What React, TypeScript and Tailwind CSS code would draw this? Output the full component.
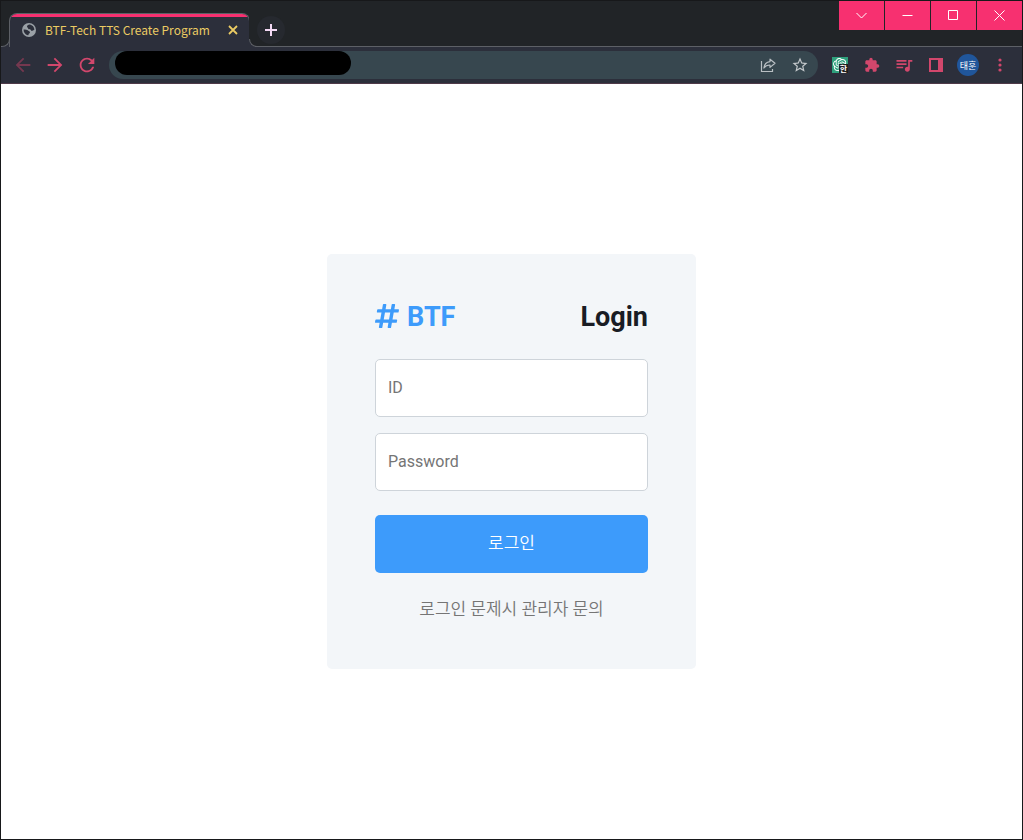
import type { ButtonHTMLAttributes, ReactNode } from "react";
import { FaHashtag } from "react-icons/fa";
import {
  MdArrowBack,
  MdArrowForward,
  MdExtension,
  MdQueueMusic,
  MdRefresh,
  MdStarBorder,
} from "react-icons/md";
import { SiOpenai } from "react-icons/si";

type IconButtonProps = ButtonHTMLAttributes<HTMLButtonElement> & {
  label: string;
  tone?: string;
  children: ReactNode;
};

function ToolButton({ label, tone = "text-[#d2476c]", children, ...rest }: IconButtonProps) {
  return (
    <button
      type="button"
      aria-label={label}
      className={`flex h-7 w-8 shrink-0 items-center justify-center ${tone}`}
      {...rest}
    >
      {children}
    </button>
  );
}

function WindowButton({ label, path }: { label: string; path: string }) {
  return (
    <button
      type="button"
      aria-label={label}
      className="flex h-[29px] w-[45px] items-center justify-center bg-[#f73070] text-white"
    >
      <svg width="11" height="11" viewBox="0 0 11 11" fill="none" stroke="currentColor">
        <path d={path} />
      </svg>
    </button>
  );
}

function GlobeIcon() {
  return (
    <svg width="14" height="14" viewBox="0 0 14 14" className="shrink-0">
      <circle cx="7" cy="7" r="7" fill="#9aa0a6" />
      <path
        d="M7.600 1.600C6.200 2 5 2.700 5 3.600c0 .9.900.9 1 1.700.1 1 1.300 1 2.300 1.200.8.200.6 1.400 1.600 1.400.9 0 1.100-.9 2.400-.8C12.500 4.300 10.500 2 7.600 1.600z"
        fill="#2c2f3b"
      />
      <path
        d="M1.600 6.600c-.2 2.600 1.500 5 4.200 5.700.6.100.8-.5.800-1.100 0-.8 1.400-.7 1.400-1.700 0-1.300-1.300-1-2-1.900C5.300 6.700 3.400 6.600 1.600 6.600z"
        fill="#2c2f3b"
      />
    </svg>
  );
}

function TabStrip() {
  return (
    <div className="flex h-[46px] items-end bg-[#212427]">
      <div className="h-2 w-[9px] shrink-0 bg-[#2c2f3b]">
        <div className="h-2 w-[9px] rounded-br-lg border-r border-b border-[#5d6066] bg-[#212427]" />
      </div>
      <div className="-ml-px h-[34px] w-[241px] overflow-hidden rounded-t-lg border-x border-t border-[#5d6066] bg-[#2c2f3b]">
        <div className="h-[3px] bg-[#f73070]" />
        <div className="flex h-[26px] items-center pr-2 pl-3 text-[#ebcb63]">
          <GlobeIcon />
          <span className="ml-[9px] flex-1 truncate font-['Noto_Sans_CJK_KR','Open_Sans',sans-serif] text-[12px] leading-4">
            BTF-Tech TTS Create Program
          </span>
          <button type="button" aria-label="Close tab" className="flex h-4 w-4 items-center justify-center">
            <svg width="10" height="10" viewBox="0 0 10 10" fill="none" stroke="currentColor" strokeWidth="1.8">
              <path d="M1 1l8 8M9 1l-8 8" />
            </svg>
          </button>
        </div>
      </div>
      <div className="-ml-px flex h-[46px] flex-1 items-end bg-[#212427]">
        <div className="h-2 w-2 shrink-0 bg-[#2c2f3b]">
          <div className="h-2 w-2 rounded-bl-lg border-b border-l border-[#5d6066] bg-[#212427]" />
        </div>
        <div className="flex h-[46px] flex-1 justify-between border-b border-[#5d6066]">
          <button
            type="button"
            aria-label="New tab"
            className="mt-[15px] flex h-7 w-7 items-center justify-center rounded-full bg-[#26292f] text-[#f3d9f4]"
          >
            <svg width="12" height="12" viewBox="0 0 12 12" fill="none" stroke="currentColor" strokeWidth="2">
              <path d="M6 0v12M0 6h12" />
            </svg>
          </button>
          <div className="flex gap-px">
            <WindowButton label="Search tabs" path="M.5 3l5 5 5-5" />
            <WindowButton label="Minimize" path="M.5 5.500h10" />
            <WindowButton label="Maximize" path="M.5.5h9v9h-9z" />
            <WindowButton label="Close" path="M.5.500l10 10M10.500.500l-10 10" />
          </div>
        </div>
      </div>
    </div>
  );
}

function Toolbar() {
  return (
    <div className="flex h-[37px] items-start border-b border-[#4f3a49] bg-[#2c2f3b] px-[6px] pt-1">
      <ToolButton label="Back" tone="text-[#75384f]" disabled>
        <MdArrowBack size={22} />
      </ToolButton>
      <ToolButton label="Forward">
        <MdArrowForward size={22} />
      </ToolButton>
      <ToolButton label="Reload">
        <MdRefresh size={22} />
      </ToolButton>
      <div className="mx-[6px] flex h-7 flex-1 items-start rounded-full bg-[#37474f] pr-[2px] pl-[6px]">
        <input
          type="text"
          aria-label="Address"
          className="h-6 w-[236px] rounded-full bg-black px-3 text-xs text-black outline-none"
        />
        <div className="flex-1" />
        <ToolButton label="Share" tone="text-[#b9bfc3]">
          <svg width="16" height="16" viewBox="0 0 16 16" fill="none" stroke="currentColor" strokeWidth="1.2">
            <path d="M1.500 4v10.500h11v-2.500" />
            <path
              d="M10 2.200l5 4.100-5 4.100V8C7.200 8 5.300 8.900 3.900 11 4.300 7.700 6.300 5 10 4.600z"
              strokeLinejoin="round"
            />
          </svg>
        </ToolButton>
        <ToolButton label="Bookmark" tone="text-[#c3c8cb]">
          <MdStarBorder size={18} />
        </ToolButton>
      </div>
      <ToolButton label="ChatGPT extension">
        <span className="relative flex h-4 w-4 items-center justify-center bg-[#2fa07c] text-white">
          <SiOpenai size={14} />
          <span className="absolute right-0 bottom-0 flex h-[9px] w-[9px] items-center justify-center bg-[#202020] font-['Noto_Sans_CJK_KR',sans-serif] text-[8px] leading-none font-bold text-white">
            한
          </span>
        </span>
      </ToolButton>
      <ToolButton label="Extensions">
        <MdExtension size={16} />
      </ToolButton>
      <ToolButton label="Media controls">
        <MdQueueMusic size={20} />
      </ToolButton>
      <ToolButton label="Side panel">
        <svg width="14" height="14" viewBox="0 0 14 14" fill="currentColor" fillRule="evenodd">
          <path d="M0 0h14v14H0zM2 2v10h7V2z" />
        </svg>
      </ToolButton>
      <ToolButton label="Profile" tone="text-white">
        <span className="flex h-[22px] w-[22px] items-center justify-center rounded-full bg-[#20569b] font-['Noto_Sans_CJK_KR',sans-serif] text-[9px] leading-none whitespace-nowrap">
          태훈
        </span>
      </ToolButton>
      <ToolButton label="Menu">
        <svg width="4" height="14" viewBox="0 0 4 14" fill="currentColor">
          <circle cx="2" cy="2" r="1.600" />
          <circle cx="2" cy="7" r="1.600" />
          <circle cx="2" cy="12" r="1.600" />
        </svg>
      </ToolButton>
    </div>
  );
}

const fieldClass =
  "block h-[58px] w-full rounded-[5px] border border-[#ced4da] bg-white px-3 pb-[2px] text-[16px] text-[#191c24] outline-none placeholder:text-[#757575]";

function LoginCard() {
  return (
    <form
      className="w-full max-w-[369px] rounded-[5px] bg-[#f3f6f9] p-12"
      onSubmit={(event) => event.preventDefault()}
    >
      <div className="mb-[26px] flex items-center justify-between text-[27px] leading-[31px] font-bold">
        <a href="#" className="flex items-start gap-2 text-[#3d9bfb]">
          <FaHashtag className="h-7 w-6" />
          <span>BTF</span>
        </a>
        <h1 className="text-[#191c24]">Login</h1>
      </div>
      <div className="flex flex-col gap-4">
        <input type="text" aria-label="ID" placeholder="ID" className={fieldClass} />
        <input type="password" aria-label="Password" placeholder="Password" className={fieldClass} />
      </div>
      <button
        type="submit"
        className="mt-6 mb-6 h-[58px] w-full rounded-[5px] bg-[#3d9bfb] text-[17px] font-[350] text-white"
      >
        로그인
      </button>
      <p className="text-center text-[17px] leading-6 font-[350] text-[#757575]">로그인 문제시 관리자 문의</p>
    </form>
  );
}

export default function App() {
  return (
    <div className="flex min-h-screen flex-col border border-[#17181a] bg-white">
      <header>
        <TabStrip />
        <Toolbar />
      </header>
      <main className="flex flex-1 items-center justify-center font-['Roboto','Noto_Sans_CJK_KR',sans-serif]">
        <LoginCard />
      </main>
    </div>
  );
}
